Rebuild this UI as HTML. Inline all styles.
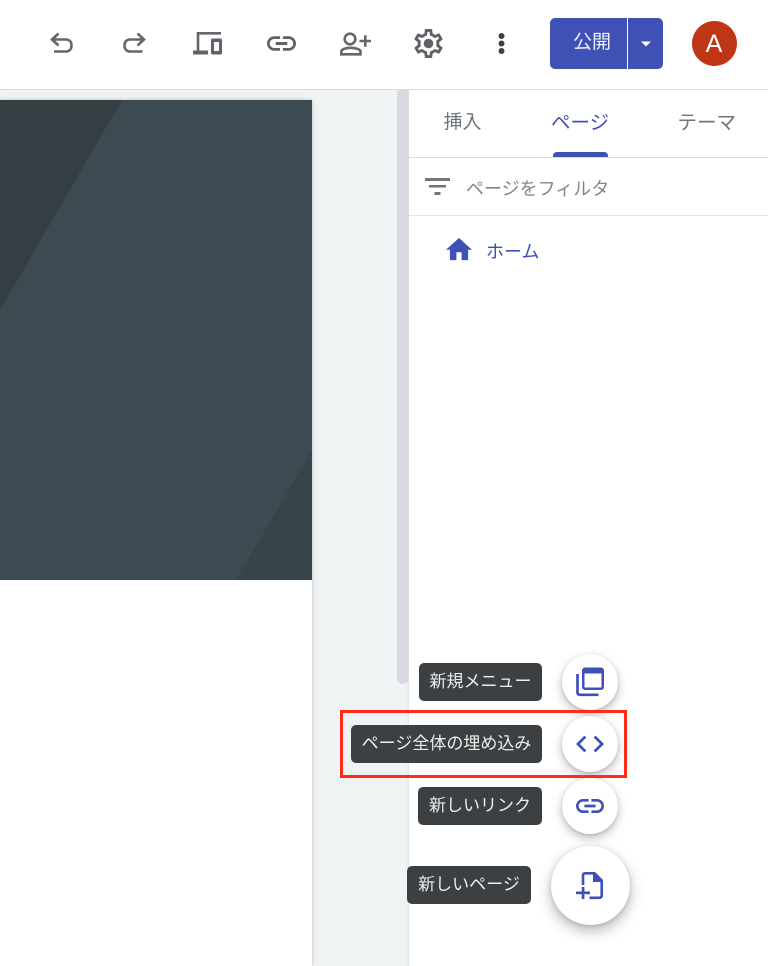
<!DOCTYPE html>
<html lang="ja">
<head>
<meta charset="utf-8">
<title>Sites</title>
<style>
html,body{margin:0;padding:0;}
body{width:768px;height:966px;position:relative;overflow:hidden;background:#eff3f4;font-family:"Liberation Sans","Noto Sans CJK JP",sans-serif;}
.abs{position:absolute;}
#header{left:0;top:0;width:768px;height:89px;background:#fff;border-bottom:1px solid #dcdbe2;}
#page{left:0;top:100px;width:312px;height:866px;background:#fff;box-shadow:0 0 4px rgba(0,0,0,.22);}
#panel{left:409px;top:90px;width:359px;height:876px;background:#fff;box-shadow:-1px 0 2px rgba(0,0,0,.08);}
#scroll{left:397px;top:90px;width:12px;height:594px;background:#d9dae1;border-radius:3px 0 6px 6px;}
.t{position:absolute;font-size:18px;line-height:26px;white-space:nowrap;}
.line{position:absolute;left:409px;width:359px;height:1px;}
.tip{position:absolute;height:38px;background:#3c4043;border-radius:5px;color:#eceded;font-size:17px;line-height:37px;text-align:center;white-space:nowrap;}
.fab{position:absolute;background:#fff;border-radius:50%;box-shadow:0 4px 10px rgba(0,0,0,.26),0 1px 3px rgba(0,0,0,.12);}
svg{position:absolute;left:0;top:0;overflow:visible;}
</style>
</head>
<body>
<div class="abs" id="page"></div>
<svg class="abs" style="left:0;top:100px;overflow:hidden" width="312" height="480" viewBox="0 0 312 480">
  <rect width="312" height="480" fill="#3c4a52"/>
  <path d="M0 0H122L0 210Z" fill="#353e43"/>
  <path d="M312 350V480H236Z" fill="#39444a"/>
</svg>
<div class="abs" id="panel"></div>
<div class="abs" id="scroll"></div>
<div class="abs" id="header"></div>

<!-- toolbar icons -->
<svg width="768" height="90" viewBox="0 0 768 90" fill="none">
  <g stroke="#63676c" stroke-width="2.600">
    <path d="M58.500 33.500L52 39.500L58.500 45.500M52 39.500H66C69.600 39.500 71.500 42 71.500 45.500C71.500 49 69.500 51.500 66 51.500H54"/>
    <path d="M137.500 33.500L144 39.500L137.500 45.500M144 39.500H130C126.400 39.500 124.500 42 124.500 45.500C124.500 49 126.500 51.500 130 51.500H142.500"/>
    <path d="M221 33.300H198V52"/>
    <circle cx="350" cy="39" r="5.300"/>
    <path d="M341.300 54.300V51.500C341.300 49.500 345.500 47.800 350.500 47.800C355.500 47.800 360.500 49.500 360.500 51.500V54.300Z"/>
    <path d="M359.500 41H371M365.300 35.200V46.800"/>
  </g>
  <g fill="#5f6368">
    <rect x="193" y="50.500" width="15" height="4"/>
    <path fill-rule="evenodd" d="M212.500 38.500H220.500A1.500 1.500 0 0 1 222 40V53A1.500 1.500 0 0 1 220.500 54.500H212.500A1.500 1.500 0 0 1 211 53V40A1.500 1.500 0 0 1 212.500 38.500ZM214 42V51H219V42Z"/>
    <path transform="translate(264.100 26.100) scale(1.45)" d="M3.900 12c0-1.710 1.390-3.100 3.100-3.100h4V7H7c-2.760 0-5 2.240-5 5s2.240 5 5 5h4v-1.900H7c-1.710 0-3.100-1.390-3.100-3.100zM8 13h8v-2H8v2zm9-6h-4v1.900h4c1.710 0 3.100 1.390 3.100 3.100s-1.390 3.100-3.100 3.100h-4V17h4c2.760 0 5-2.240 5-5s-2.240-5-5-5z"/>
    <path transform="translate(411.100 26.100) scale(1.45)" d="M19.430 12.980c.04-.32.07-.64.07-.98 0-.34-.03-.66-.07-.98l2.110-1.650c.19-.15.24-.42.12-.64l-2-3.460c-.09-.16-.26-.25-.44-.25-.06 0-.12.01-.17.03l-2.490 1c-.52-.4-1.080-.73-1.690-.98l-.38-2.650C14.460 2.180 14.250 2 14 2h-4c-.25 0-.46.18-.49.42l-.38 2.650c-.61.25-1.170.59-1.690.98l-2.490-1c-.06-.02-.12-.03-.18-.03-.17 0-.34.09-.43.25l-2 3.460c-.13.22-.07.49.12.64l2.110 1.650c-.04.32-.07.65-.07.98 0 .33.03.66.07.98l-2.110 1.650c-.19.15-.24.42-.12.64l2 3.460c.09.16.26.25.44.25.06 0 .12-.01.17-.03l2.490-1c.52.4 1.080.73 1.690.98l.38 2.650c.03.24.24.42.49.42h4c.25 0 .46-.18.49-.42l.38-2.650c.61-.25 1.170-.59 1.690-.98l2.490 1c.06.02.12.03.18.03.17 0 .34-.09.43-.25l2-3.460c.12-.22.07-.49-.12-.64l-2.110-1.650zm-1.980-1.710c.04.31.05.52.05.73 0 .21-.02.43-.05.73l-.14 1.130.89.7 1.080.84-.7 1.210-1.270-.51-1.040-.42-.9.68c-.43.32-.84.56-1.250.73l-1.060.43-.16 1.130-.2 1.350h-1.400l-.19-1.350-.16-1.130-1.060-.43c-.43-.18-.83-.41-1.230-.71l-.91-.7-1.060.43-1.270.51-.7-1.210 1.080-.84.89-.7-.14-1.130c-.03-.31-.05-.54-.05-.74s.02-.43.05-.73l.14-1.130-.89-.7-1.080-.84.7-1.210 1.270.51 1.040.42.9-.68c.43-.32.84-.56 1.250-.73l1.060-.43.16-1.130.2-1.350h1.390l.19 1.350.16 1.130 1.060.43c.43.18.83.41 1.230.71l.91.7 1.060-.43 1.270-.51.7 1.210-1.070.85-.89.7.14 1.130z"/>
    <circle cx="428.500" cy="43.500" r="4.800"/>
  </g>
  <g fill="#3c4043">
    <circle cx="501.500" cy="36" r="3"/>
    <circle cx="501.500" cy="43.500" r="3"/>
    <circle cx="501.500" cy="51" r="3"/>
  </g>
</svg>

<!-- publish -->
<div class="abs" style="left:550px;top:18px;width:113px;height:51px;background:#3f51b5;border-radius:5px;"></div>
<div class="abs" style="left:627px;top:18px;width:1px;height:51px;background:#fff;"></div>
<div class="t" style="left:550px;top:30px;width:84px;text-align:center;color:#f1f2fa;font-size:19px;">公開</div>
<svg width="768" height="90" viewBox="0 0 768 90"><path d="M641 41.500H651L646 46.500Z" fill="#fff"/></svg>

<!-- avatar -->
<div class="abs" style="left:691.500px;top:21px;width:45px;height:45px;border-radius:50%;background:#bf3617;color:#fff;font-size:25px;line-height:46px;text-align:center;">A</div>

<!-- tabs -->
<div class="t" style="left:443.500px;top:110px;color:#70757a;font-size:19px;">挿入</div>
<div class="t" style="left:551px;top:110px;color:#3f51b5;font-size:19.500px;">ページ</div>
<div class="t" style="left:677.500px;top:110px;color:#70757a;font-size:19.500px;">テーマ</div>
<div class="abs" style="left:553px;top:152px;width:55px;height:5px;background:#3f51b5;border-radius:4px 4px 0 0;"></div>
<div class="line" style="top:157px;background:#dcdbe2;"></div>

<!-- filter -->
<svg width="768" height="260" viewBox="0 0 768 260">
  <g fill="#757575">
    <rect x="425" y="178" width="25" height="3"/>
    <rect x="429" y="185" width="17" height="2.500"/>
    <rect x="434.500" y="192" width="6" height="3"/>
  </g>
  <path transform="translate(443.400 234.100) scale(1.300)" fill="#3f51b5" d="M10 20v-6h4v6h5v-8h3L12 3 2 12h3v8z"/>
</svg>
<div class="t" style="left:466px;top:176px;color:#80868b;">ページをフィルタ</div>
<div class="line" style="top:215px;background:#e3e3e7;"></div>
<div class="t" style="left:486px;top:239px;color:#3f51b5;">ホーム</div>

<!-- tooltips -->
<div class="tip" style="left:419px;top:663px;width:123px;">新規メニュー</div>
<div class="tip" style="left:351px;top:725px;width:191px;">ページ全体の埋め込み</div>
<div class="tip" style="left:418px;top:787px;width:124px;">新しいリンク</div>
<div class="tip" style="left:407px;top:866px;width:124px;">新しいページ</div>

<!-- fabs -->
<div class="fab" style="left:562px;top:654px;width:56px;height:56px;"></div>
<div class="fab" style="left:562px;top:716px;width:56px;height:56px;"></div>
<div class="fab" style="left:562px;top:778px;width:56px;height:56px;"></div>
<div class="fab" style="left:550.500px;top:846px;width:79px;height:79px;box-shadow:0 6px 14px rgba(0,0,0,.28),0 1px 4px rgba(0,0,0,.14);"></div>

<svg width="768" height="966" viewBox="0 0 768 966">
  <!-- copy icon -->
  <path fill="#3f51b5" fill-rule="evenodd" d="M585 667.500H601A3 3 0 0 1 604 670.500V687A3 3 0 0 1 601 690H585A3 3 0 0 1 582 687V670.500A3 3 0 0 1 585 667.500ZM584.500 673.500V687.500H601.500V673.500Z"/>
  <path d="M577.500 674V692.500Q577.500 694.800 580 694.800H598.500" fill="none" stroke="#3f51b5" stroke-width="2.700"/>
  <g fill="#3f51b5">
    <path transform="translate(573.200 727.200) scale(1.400)" d="M9.400 16.600L4.800 12l4.600-4.600L8 6l-6 6 6 6 1.400-1.400zm5.200 0l4.600-4.600-4.600-4.600L16 6l6 6-6 6-1.400-1.400z"/>
    <path transform="translate(573.200 789.200) scale(1.400)" d="M3.900 12c0-1.710 1.390-3.100 3.100-3.100h4V7H7c-2.760 0-5 2.240-5 5s2.240 5 5 5h4v-1.900H7c-1.710 0-3.100-1.390-3.100-3.100zM8 13h8v-2H8v2zm9-6h-4v1.900h4c1.710 0 3.100 1.390 3.100 3.100s-1.390 3.100-3.100 3.100h-4V17h4c2.760 0 5-2.240 5-5s-2.240-5-5-5z"/>
    <path d="M593 872L602 881V882H593Z"/>
    <rect x="576" y="891.500" width="14" height="2.700"/>
    <rect x="581.700" y="887" width="2.700" height="12"/>
  </g>
  <path d="M583 885V875.500Q583 873.300 585.200 873.300H594.500L601.700 880.500V895Q601.700 897.800 599 897.800H589.500" fill="none" stroke="#3f51b5" stroke-width="2.600"/>
  <rect x="341.500" y="711.500" width="284" height="65" fill="none" stroke="#ff2a1a" stroke-width="3"/>
</svg>
</body>
</html>
